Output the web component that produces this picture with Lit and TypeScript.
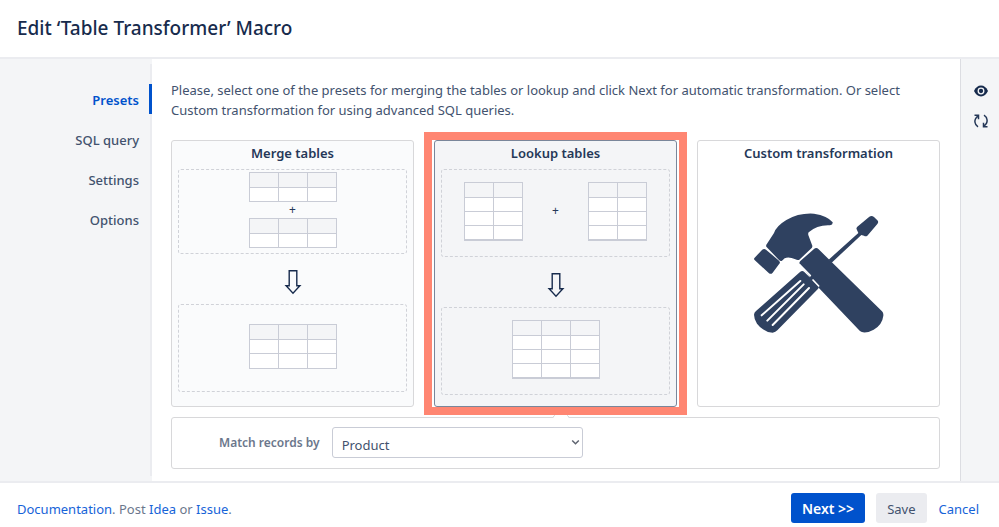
import { LitElement, html, css, svg } from "lit";
import { customElement, property, state } from "lit/decorators.js";
import { classMap } from "lit/directives/class-map.js";

/** Small schematic table used inside the preset cards. */
@customElement("mini-table")
class MiniTable extends LitElement {
  @property({ type: Number }) cols = 3;
  @property({ type: Number }) rows = 2;

  static styles = css`
    :host { display: block; }
    .grid {
      display: grid;
      gap: 1px;
      padding: 1px;
      box-sizing: border-box;
      background: #c9ccd6;
      grid-template-rows: 14px;
      grid-auto-rows: 1fr;
    }
    .c2 { grid-template-columns: repeat(2, 28px); }
    .c3 { grid-template-columns: repeat(3, 28px); }
    .r2 { height: 30px; }
    .r3 { height: 45px; }
    .r4 { height: 59px; }
    .cell { background: #fff; }
    .head { background: #f4f5f7; }
  `;

  render() {
    const cells = Array.from({ length: this.cols * this.rows }, (_, i) => i);
    return html`<div class="grid c${this.cols} r${this.rows}">
      ${cells.map((i) => html`<span class=${classMap({ cell: true, head: i < this.cols })}></span>`)}
    </div>`;
  }
}

const arrow = html`<svg class="arrow" width="18" height="26" viewBox="0 0 18 26" aria-hidden="true">
  <path d="M5.2 1.7H12.8V16.8H15.9L9 24.2L2.1 16.8H5.2Z" fill="none" stroke="#172b4d" stroke-width="1.4" />
</svg>`;

const tools = html`<svg class="tools" width="130" height="120" viewBox="42 38 390 360" aria-hidden="true">
  ${svg`
  <g fill="#2f4160">
    <path d="M43 178Q41 175 44 172L66 149Q72 143 78 148L117 181Q122 186 118 190L98 217Q93 223 87 219Z" />
    <path d="M79 139Q77 135 81 130L102 98Q109 77 139 59Q177 37 222 40Q263 46 278 66Q279 74 270 75Q232 73 206 96Q203 100 206 107L217 136Q218 142 212 146L178 178Q173 181 166 177Q146 168 134 174L126 181Q122 184 117 179Z" />
    <path d="M180 192Q176 187 181 182L222 146Q229 140 236 147L426 333Q431 338 430 346Q427 373 401 388Q383 398 369 396Q363 395 359 391L231 257Z" />
    <path d="M180 215Q187 209 193 215L209 231L214 226L222 233L217 238L234 257Q238 262 233 267L112 390Q107 396 98 397Q70 395 51 370Q42 356 42 343Q42 337 48 332Z" />
    <path d="M266 178L355 98L350 87Q348 83 352 79L388 49Q395 44 402 50L412 60Q417 65 412 71L382 106Q377 110 372 106L364 104L275 187Z" />
  </g>
  <g stroke="#fff" stroke-width="6" stroke-linecap="round">
    <path d="M181 242L65 345M191 252L82 361M207 263L98 374" />
    <path d="M180 194L211 226M219 239L236 257" stroke-width="5" />
  </g>`}
</svg>`;

@customElement("app-root")
class AppRoot extends LitElement {
  @state() private tab = "Presets";
  @state() private preset = "lookup";

  static styles = css`
    :host {
      display: flex;
      flex-direction: column;
      min-height: 100vh;
      background: #fff;
      color: #42526e;
      font: 13px/20px "Noto Sans", "Open Sans", sans-serif;
    }
    * { box-sizing: border-box; }
    button, select { font: inherit; color: inherit; }
    button { cursor: pointer; }
    a { color: #1663d8; text-decoration: none; }

    .header { padding: 14px 17px 15px; border-bottom: 2px solid #ebecf0; }
    .title { margin: 0; font-size: 19px; line-height: 28px; font-weight: 500; color: #172b4d; }

    .body { flex: 1; display: flex; }
    .sidebar { width: 152px; flex: none; padding: 5px 0; background: #f4f5f7; display: flex; }
    .nav {
      flex: 1;
      display: flex;
      flex-direction: column;
      gap: 10px;
      padding-top: 20px;
      border-right: 2px solid #ebecf0;
    }
    .tab {
      height: 30px;
      margin-right: -2px;
      padding: 2px 10px 0 0;
      border: 0;
      border-right: 3px solid transparent;
      background: none;
      text-align: right;
      font-weight: 500;
    }
    .tab.on { color: #0052cc; border-color: #0052cc; font-weight: 600; }

    .main { flex: 1; min-width: 0; padding: 21px 20px 12px 19px; }
    .intro { margin: 0 0 20px; }
    .cards { display: grid; grid-template-columns: repeat(3, 1fr); gap: 20px; }
    .card {
      position: relative;
      display: flex;
      flex-direction: column;
      justify-content: flex-start;
      padding: 0 6px 11px;
      border: 1px solid #d8d8da;
      border-radius: 3px;
      background: #fafbfc;
    }
    .card.plain { background: #fff; }
    .card.on { background: #f4f5f7; border-color: #7a869a; }
    .card.on::after {
      content: "";
      position: absolute;
      inset: -9px -11px;
      border: 8px solid #ff8672;
      pointer-events: none;
    }
    .name { line-height: 24px; height: 28px; font-weight: 600; color: #253858; text-align: center; }
    .box {
      display: flex;
      align-items: center;
      justify-content: center;
      height: 88px;
      padding-bottom: 4px;
      border: 1px dashed #d0d2d8;
      border-radius: 3px;
    }
    .stack { flex-direction: column; height: 85px; }
    .split { justify-content: space-between; padding: 0 22px 4px; }
    .plus { line-height: 16px; font-size: 12px; color: #253858; }
    .arrow { display: block; margin: 15px auto 9px; }
    .tools { display: block; margin: 44px auto 0; }

    .match {
      position: relative;
      display: flex;
      align-items: center;
      gap: 12px;
      margin-top: 10px;
      padding: 9px 20px 10px 47px;
      border: 1px solid #d8d8da;
      border-radius: 3px;
    }
    .notch { position: absolute; left: 50%; top: -4px; margin-left: -4px; }
    .label { font-size: 12px; font-weight: 600; color: #6b778c; }
    .picker { position: relative; width: 251px; }
    .select {
      display: block;
      appearance: none;
      width: 100%;
      height: 31px;
      padding: 4px 24px 0 9px;
      border: 1px solid #c9ccd6;
      border-radius: 3px;
      background: #fff;
    }
    .chevron { position: absolute; right: 3px; top: 12px; pointer-events: none; }

    .rail {
      width: 39px;
      flex: none;
      display: flex;
      flex-direction: column;
      align-items: center;
      gap: 14px;
      padding: 24px 0 0 1px;
      background: #f4f5f7;
      border-left: 1px solid #dcdde2;
    }
    .icon { border: 0; padding: 0; background: none; height: 16px; width: 16px; }
    .icon svg { display: block; }

    .footer {
      display: flex;
      align-items: center;
      padding: 10px 20px 4px 17px;
      border-top: 2px solid #ebecf0;
    }
    .links { margin: 0 auto 0 0; color: #6b778c; padding-top: 2px; }
    .btn { height: 30px; border: 0; border-radius: 3px; padding: 2px 11px 0; }
    .next { background: #0052cc; color: #fff; font-weight: 600; font-size: 14px; }
    .save { background: #ebecf0; margin: 0 12px 0 11px; }
    .cancel { padding: 2px 0 0; background: none; color: #1663d8; }
  `;

  private card(id: string, name: string, content: unknown) {
    const on = this.preset === id;
    return html`<button
      class=${classMap({ card: true, plain: id === "custom", on })}
      aria-pressed=${on ? "true" : "false"}
      @click=${() => (this.preset = id)}
    ><span class="name">${name}</span>${content}</button>`;
  }

  render() {
    return html`
      <header class="header"><h1 class="title">Edit ‘Table Transformer’ Macro</h1></header>
      <div class="body">
        <aside class="sidebar">
          <nav class="nav">
            ${["Presets", "SQL query", "Settings", "Options"].map(
              (t) => html`<button class=${classMap({ tab: true, on: t === this.tab })} @click=${() => (this.tab = t)}>${t}</button>`
            )}
          </nav>
        </aside>
        <main class="main">
          <p class="intro">
            Please, select one of the presets for merging the tables or lookup and click Next for automatic
            transformation. Or select Custom transformation for using advanced SQL queries.
          </p>
          <div class="cards">
            ${this.card("merge", "Merge tables", html`
              <span class="box stack">
                <mini-table cols="3" rows="2"></mini-table>
                <span class="plus">+</span>
                <mini-table cols="3" rows="2"></mini-table>
              </span>
              ${arrow}
              <span class="box"><mini-table cols="3" rows="3"></mini-table></span>`)}
            ${this.card("lookup", "Lookup tables", html`
              <span class="box split">
                <mini-table cols="2" rows="4"></mini-table>
                <span class="plus">+</span>
                <mini-table cols="2" rows="4"></mini-table>
              </span>
              ${arrow}
              <span class="box"><mini-table cols="3" rows="4"></mini-table></span>`)}
            ${this.card("custom", "Custom transformation", tools)}
          </div>
          <div class="match">
            <svg class="notch" width="18" height="4" viewBox="0 0 18 4" aria-hidden="true">
              <path d="M1 4L4 1H14L17 4Z" fill="#fff" />
              <path d="M0.5 3.5L3 1.2M17.5 3.5L15 1.2" stroke="#d8d8da" />
            </svg>
            <label class="label" for="match">Match records by</label>
            <div class="picker">
              <select class="select" id="match"><option>Product</option></select>
              <svg class="chevron" width="9" height="7" viewBox="0 0 9 7" aria-hidden="true">
                <path d="M1.2 1.5L4.5 4.8L7.8 1.5" fill="none" stroke="#5e6470" stroke-width="1.5" />
              </svg>
            </div>
          </div>
        </main>
        <aside class="rail">
          <button class="icon" aria-label="Preview">
            <svg width="16" height="16" viewBox="0 0 16 16">
              <path d="M1 8C2.6 4.5 5 2.6 8 2.6S13.4 4.5 15 8C13.4 11.5 11 13.4 8 13.4S2.6 11.5 1 8Z" fill="#172b4d" />
              <circle cx="8" cy="8" r="2.8" fill="none" stroke="#f4f5f7" stroke-width="1.3" />
            </svg>
          </button>
          <button class="icon" aria-label="Refresh">
            <svg width="16" height="16" viewBox="0 0 16 16" fill="none" stroke="#253858" stroke-width="1.5">
              <path d="M1.5 2.3H5.5V6.3M5.2 2.8Q1.6 5.4 1.9 9Q2.2 12 5 13.8" />
              <path d="M14.5 13.7H10.5V9.7M10.8 13.2Q14.4 10.6 14.1 7Q13.8 4 11 2.2" />
            </svg>
          </button>
        </aside>
      </div>
      <footer class="footer">
        <p class="links"><a href="#docs">Documentation</a>. Post <a href="#idea">Idea</a> or <a href="#issue">Issue</a>.</p>
        <button class="btn next">Next &gt;&gt;</button>
        <button class="btn save">Save</button>
        <button class="btn cancel">Cancel</button>
      </footer>
    `;
  }
}
